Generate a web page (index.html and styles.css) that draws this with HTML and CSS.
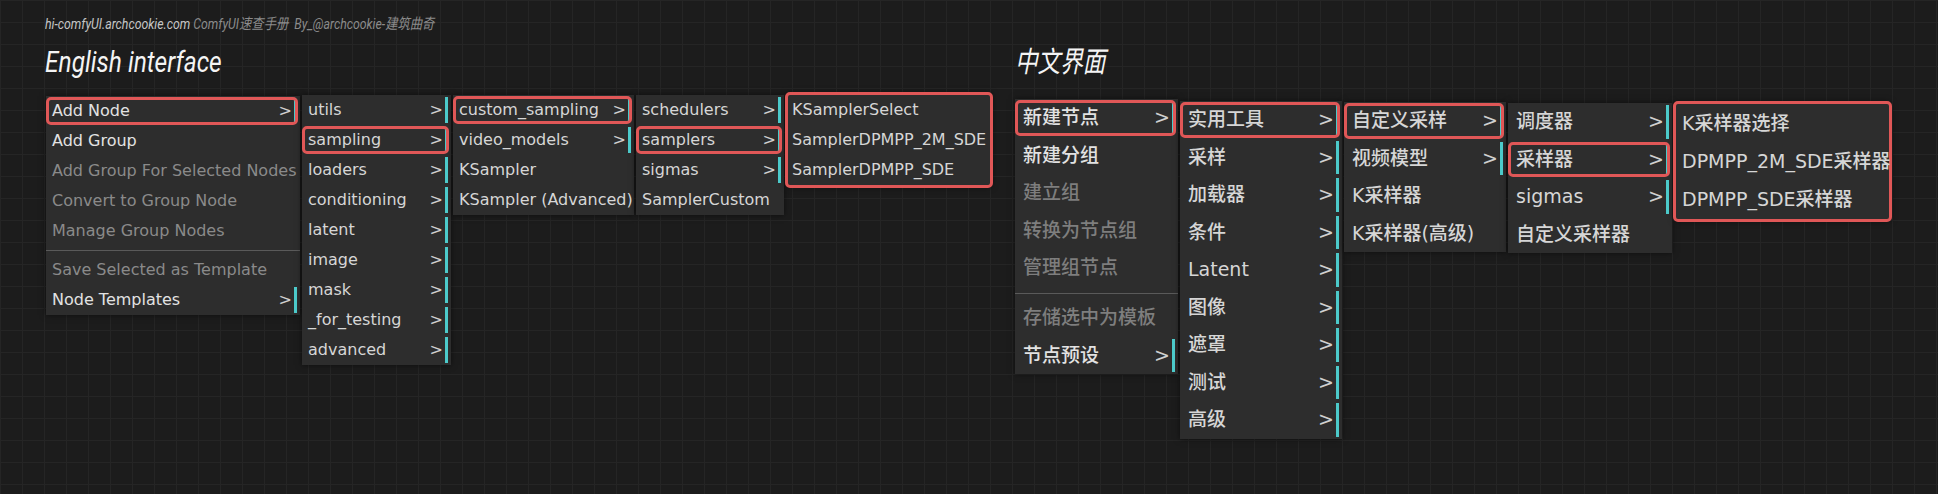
FILE: index.html
```html
<!DOCTYPE html>
<html lang="en">
  <head>
    <meta charset="UTF-8" />
    <meta name="viewport" content="width=device-width, initial-scale=1.0" />
    <title>ComfyUI 速查手册</title>
    <link rel="stylesheet" href="styles.css">
  </head>
  <body>
    <div class="canvas">
      <p class="credit"><span class="narrow"><span class="site">hi-comfyUI.archcookie.com</span> ComfyUI速查手册&nbsp; By_@archcookie-建筑曲奇</span></p>
      <div class="panels">
        <section class="panel en">
          <h2 class="title"><span class="narrow">English interface</span></h2>
          <div class="cascade">
            <ul class="menu m1">
              <li class="entry sub mark">Add Node</li>
              <li class="entry">Add Group</li>
              <li class="entry off">Add Group For Selected Nodes</li>
              <li class="entry off">Convert to Group Node</li>
              <li class="entry off">Manage Group Nodes</li>
              <li class="sep"></li>
              <li class="entry off">Save Selected as Template</li>
              <li class="entry sub">Node Templates</li>
            </ul>
            <ul class="menu m2">
              <li class="entry sub">utils</li>
              <li class="entry sub mark">sampling</li>
              <li class="entry sub">loaders</li>
              <li class="entry sub">conditioning</li>
              <li class="entry sub">latent</li>
              <li class="entry sub">image</li>
              <li class="entry sub">mask</li>
              <li class="entry sub">_for_testing</li>
              <li class="entry sub">advanced</li>
            </ul>
            <ul class="menu m3">
              <li class="entry sub mark">custom_sampling</li>
              <li class="entry sub">video_models</li>
              <li class="entry">KSampler</li>
              <li class="entry">KSampler (Advanced)</li>
            </ul>
            <ul class="menu m4">
              <li class="entry sub">schedulers</li>
              <li class="entry sub mark">samplers</li>
              <li class="entry sub">sigmas</li>
              <li class="entry">SamplerCustom</li>
            </ul>
            <ul class="menu m5 mark">
              <li class="entry">KSamplerSelect</li>
              <li class="entry">SamplerDPMPP_2M_SDE</li>
              <li class="entry">SamplerDPMPP_SDE</li>
            </ul>
          </div>
        </section>

        <section class="panel cn">
          <h2 class="title"><span class="narrow">中文界面</span></h2>
          <div class="cascade">
            <ul class="menu c1">
              <li class="entry sub mark">新建节点</li>
              <li class="entry">新建分组</li>
              <li class="entry off">建立组</li>
              <li class="entry off">转换为节点组</li>
              <li class="entry off">管理组节点</li>
              <li class="sep"></li>
              <li class="entry off">存储选中为模板</li>
              <li class="entry sub">节点预设</li>
            </ul>
            <ul class="menu c2">
              <li class="entry sub mark">实用工具</li>
              <li class="entry sub">采样</li>
              <li class="entry sub">加载器</li>
              <li class="entry sub">条件</li>
              <li class="entry sub">Latent</li>
              <li class="entry sub">图像</li>
              <li class="entry sub">遮罩</li>
              <li class="entry sub">测试</li>
              <li class="entry sub">高级</li>
            </ul>
            <ul class="menu c3">
              <li class="entry sub mark">自定义采样</li>
              <li class="entry sub">视频模型</li>
              <li class="entry">K采样器</li>
              <li class="entry">K采样器(高级)</li>
            </ul>
            <ul class="menu c4">
              <li class="entry sub">调度器</li>
              <li class="entry sub mark">采样器</li>
              <li class="entry sub">sigmas</li>
              <li class="entry">自定义采样器</li>
            </ul>
            <ul class="menu c5 mark">
              <li class="entry">K采样器选择</li>
              <li class="entry">DPMPP_2M_SDE采样器</li>
              <li class="entry">DPMPP_SDE采样器</li>
            </ul>
          </div>
        </section>
      </div>
    </div>
  </body>
</html>
```

FILE: styles.css
```css
* {
  margin: 0;
  padding: 0;
  box-sizing: border-box;
  list-style: none;
}
body {
  width: 1938px;
  height: 494px;
  overflow: hidden;
  background-color: #1c1c1c;
  background-image: linear-gradient(#252525 1px, transparent 1px),
    linear-gradient(90deg, #252525 1px, transparent 1px);
  background-size: 22px 22px;
  font-family: "DejaVu Sans", "Noto Sans CJK SC", sans-serif;
}
.canvas {
  padding: 15px 0 0 45px;
}
.narrow {
  display: inline-block;
  white-space: nowrap;
  transform: scaleX(0.82);
  transform-origin: left center;
}
.credit {
  font: italic 15px/18px Roboto, "Noto Sans CJK SC", sans-serif;
  color: #8b8b8b;
}
.credit .site {
  color: #c6c6c6;
}
.panels {
  display: flex;
}
.panel.en {
  width: 970px;
}
.title {
  margin-top: 12px;
  font: italic 400 29px/34px Roboto, "Noto Sans CJK SC", sans-serif;
  color: #f4f4f4;
}
.en .title .narrow {
  transform: scaleX(0.845);
}
.cn .title .narrow {
  transform: scaleX(0.78);
}

/* menus */
.cascade {
  display: flex;
  align-items: flex-start;
  gap: 2px;
  margin-top: 14px;
}
.en .cascade {
  margin-left: 1px;
}
.menu {
  display: flex;
  flex-direction: column;
  background: #2d2d2d;
  box-shadow: 0 0 6px rgba(0, 0, 0, 0.55);
}
.entry {
  position: relative;
  white-space: nowrap;
  color: #d6d6d6;
  border-right: 3px solid transparent;
}
.entry.off {
  color: #8a8a8a;
}
.entry.sub {
  border-right-color: #4ccaca;
}
.entry.sub::after {
  content: ">";
  position: absolute;
  top: 0;
  right: 2px;
  color: #d0d0d0;
}
.entry.mark,
.menu.mark {
  outline: 3px solid #e05757;
  outline-offset: -2px;
  border-radius: 4px;
}
.sep {
  height: 1px;
  background: #5a5a5a;
}

.en .entry {
  height: 26px;
  margin: 2px 3px 2px 1px;
  padding-left: 5px;
  font-size: 16px;
  line-height: 26px;
}
.en .sep {
  margin: 4px 0;
}
.m1 { width: 254px; margin-top: 3px; }
.m1 .entry { color: #e2e2e2; }
.m1 .entry.off { color: #8a8a8a; }
.m2 { width: 149px; margin-top: 2px; }
.m3 { width: 181px; margin-top: 2px; }
.m4 { width: 148px; margin-top: 2px; }
.m5 { width: 206px; padding: 2px 0; }

.cn .entry {
  height: 33.5px;
  margin: 2px 3px 2px 1px;
  padding-left: 7px;
  font-size: 19px;
  font-weight: 500;
  line-height: 33.5px;
}
.cn .sep {
  margin: 6px 0 5.75px;
}
.c1 { width: 163px; margin-top: 6px; }
.c1 .entry { color: #e2e2e2; }
.c1 .entry.off { color: #7e7e7e; }
.c2 { width: 162px; margin-top: 8px; }
.c3 { width: 162px; margin-top: 9px; }
.c4 { width: 164px; margin-top: 10px; }
.c5 { width: 217px; margin-top: 9px; padding: 2px 0; }
.c5 .entry { height: 34.2px; line-height: 34.2px; }
```
